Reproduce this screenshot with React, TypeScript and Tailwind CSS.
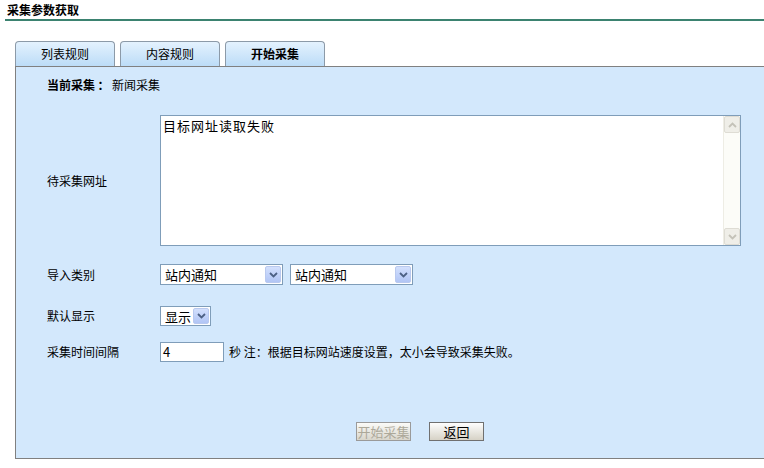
import React from 'react';

const font = { fontFamily: '"Noto Sans CJK SC", "Liberation Sans", sans-serif' };

function Arrow({ up = false, color = '#4d6185' }: { up?: boolean; color?: string }) {
  return (
    <svg width="9" height="6" viewBox="0 0 9 6" className={up ? 'rotate-180' : ''}>
      <path d="M1 1 L4.5 4.5 L8 1" fill="none" stroke={color} strokeWidth="1.8" />
    </svg>
  );
}

function Select({ value, width }: { value: string; width: string }) {
  return (
    <div className={`${width} h-full flex items-stretch bg-white border border-[#7f9db9] p-[1px]`}>
      <span className="flex-1 pl-[3px] text-[13px] leading-[17px] text-black">{value}</span>
      <span className="w-[16px] flex items-center justify-center rounded-[2px] border border-[#b9c9ef] bg-gradient-to-b from-[#d3e0fd] to-[#b1c5f5]">
        <Arrow />
      </span>
    </div>
  );
}

export default function App() {
  const tabs = ['列表规则', '内容规则', '开始采集'];

  return (
    <div className="w-[764px] h-[468px] bg-white overflow-hidden text-[12px] text-black" style={font}>
      {/* Header */}
      <div className="h-[19px] pl-[7px] pt-[3px] font-bold text-[12px] leading-[14px]">采集参数获取</div>
      <div className="ml-[5px] h-[2px] bg-[#3b8270]" />

      {/* Tabs */}
      <div className="mt-[20px] pl-[15px] flex gap-[5px] h-[25px]">
        {tabs.map((t, i) => (
          <div
            key={t}
            className={`w-[100px] h-full flex items-center justify-center rounded-t-[4px] border border-b-0 border-[#8c9aa8] bg-gradient-to-b from-[#e4f2fe] to-[#bcdcf7] text-[12px] ${
              i === 2 ? 'font-bold' : ''
            }`}
          >
            {t}
          </div>
        ))}
      </div>

      {/* Panel */}
      <div className="ml-[15px] w-[800px] h-[393px] bg-[#d3e8fc] border-t border-l border-b border-[#808080] pl-[31px] pt-[10px]">
        <div className="h-[16px] leading-[16px]">
          <span className="font-bold">当前采集</span>
          <span className="font-bold inline-block w-[17px] text-center">：</span>
          <span>新闻采集</span>
        </div>

        <div className="mt-[22px] flex items-center h-[131px]">
          <div className="w-[113px]">待采集网址</div>
          <div className="w-[581px] h-full flex bg-white border border-[#7f9db9]">
            <div className="flex-1 pl-[2px] pt-[1px] text-[13px] leading-[17px] tracking-[1px]">目标网址读取失败</div>
            <div className="w-[17px] flex flex-col bg-[#fcfcf8] border-l border-[#eeede5]">
              <span className="h-[17px] flex items-center justify-center bg-[#efeee8] border border-[#dedcd4] rounded-[2px]">
                <Arrow up color="#c4c2b8" />
              </span>
              <span className="flex-1" />
              <span className="h-[17px] flex items-center justify-center bg-[#efeee8] border border-[#dedcd4] rounded-[2px]">
                <Arrow color="#c4c2b8" />
              </span>
            </div>
          </div>
        </div>

        <div className="mt-[18px] flex items-center h-[21px]">
          <div className="w-[113px]">导入类别</div>
          <div className="flex gap-[7px] h-full">
            <Select value="站内通知" width="w-[123px]" />
            <Select value="站内通知" width="w-[123px]" />
          </div>
        </div>

        <div className="mt-[21px] flex items-center h-[20px]">
          <div className="w-[113px]">默认显示</div>
          <Select value="显示" width="w-[51px]" />
        </div>

        <div className="mt-[16px] flex items-center h-[20px]">
          <div className="w-[113px]">采集时间间隔</div>
          <div className="w-[64px] h-full bg-white border border-[#7f9db9] pl-[2px] text-[13px] leading-[18px]">4</div>
          <span className="ml-[5px]">秒 注：根据目标网站速度设置，太小会导致采集失败。</span>
        </div>

        <div className="mt-[60px] flex gap-[18px] h-[19px] pl-[309px]">
          <div className="w-[55px] h-full flex items-center justify-center border border-[#9a9a9a] bg-gradient-to-b from-[#fbfbf8] to-[#d8d5cb] text-[#aca899] text-[13px]">
            开始采集
          </div>
          <div className="w-[55px] h-full flex items-center justify-center border border-[#707070] bg-gradient-to-b from-[#fefefe] to-[#d6d2c6] text-[13px]">
            返回
          </div>
        </div>
      </div>
    </div>
  );
}
